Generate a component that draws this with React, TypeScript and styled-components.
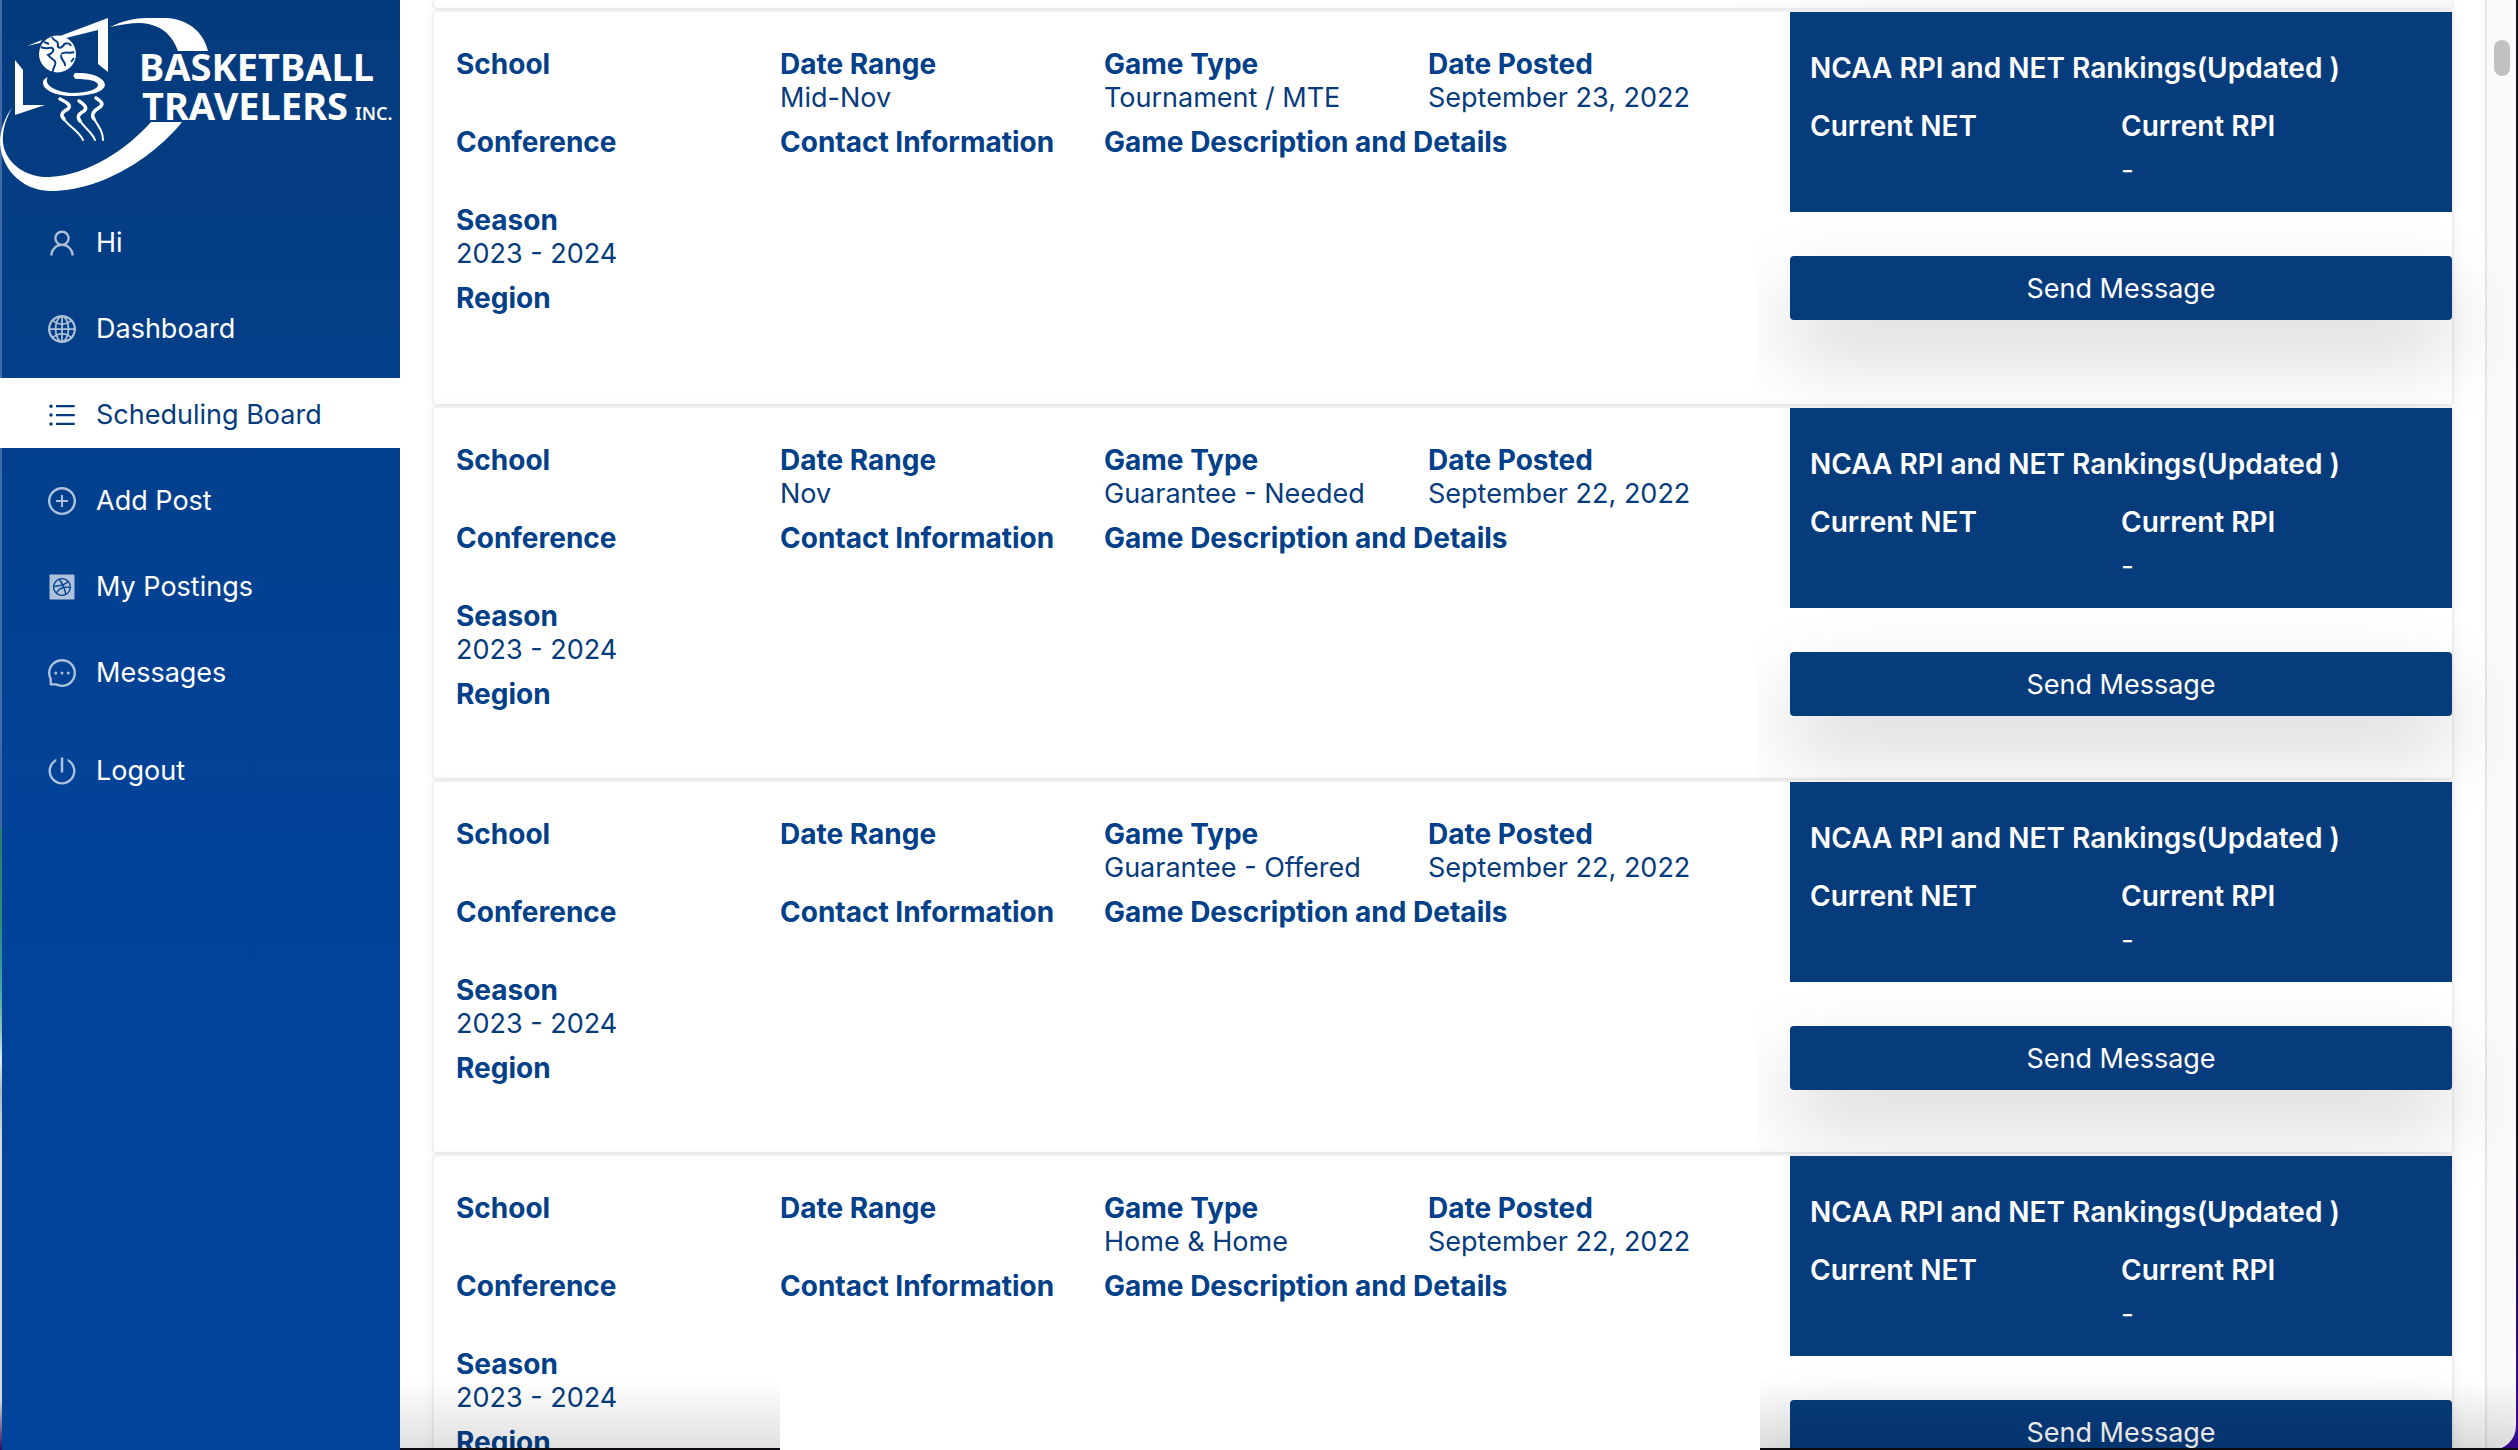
import React from "react";
import styled, { createGlobalStyle, css } from "styled-components";
import {
  AiOutlineUser,
  AiOutlineGlobal,
  AiOutlineUnorderedList,
  AiOutlinePlusCircle,
  AiFillDribbbleSquare,
  AiOutlineMessage,
  AiOutlinePoweroff,
} from "react-icons/ai";

const navy = "#063b7c";
const label = "#024089";
const line = "#efefef";

const GlobalStyle = createGlobalStyle`
  *, *::before, *::after { box-sizing: border-box; }
  body {
    margin: 0;
    background: linear-gradient(#141018 80%, #3b0a9c 98%);
    font-family: Inter, "Liberation Sans", sans-serif;
    font-size: 27px;
    line-height: 34px;
    color: ${navy};
  }
`;

const Window = styled.div`
  position: relative;
  display: flex;
  height: 100vh;
  overflow: hidden;
`;

const Sidebar = styled.aside`
  position: relative;
  flex: 0 0 400px;
  background: linear-gradient(#043b7c 0, #02439a 840px, #02449b 100%);
  &::before {
    content: "";
    position: absolute;
    inset: 0 auto 0 0;
    width: 2px;
    background: linear-gradient(
      #3f6ba6 0, #3f6ba6 826px, #2c7a72 828px, #2f8f86 940px, #38a39a 980px,
      #8fc0c0 1030px, #dcebf5 1060px, #a9bdbb 1090px, #d8dadb 1140px, #d8dadb 1400px, #2a0c60 100%
    );
  }
`;

const Logo = styled.svg`
  position: relative;
  display: block;
  width: 100%;
  height: 206px;
`;

const Nav = styled.nav`
  position: relative;
  display: flex;
  flex-direction: column;
  gap: 16px;
`;

const NavLink = styled.a<{ $active?: boolean; $last?: boolean }>`
  display: flex;
  align-items: center;
  gap: 18px;
  height: 70px;
  padding: 3px 0 0 46px;
  color: #fff;
  text-decoration: none;
  svg {
    width: 32px;
    height: 32px;
    opacity: 0.68;
  }
  ${(p) => p.$last && css`margin-top: 12px;`}
  ${(p) =>
    p.$active &&
    css`
      background: #fff;
      color: ${navy};
      svg { opacity: 1; }
    `}
`;

const Board = styled.main`
  flex: 1;
  min-width: 0;
  padding: 0 31px 0 32px;
  background: #fff;
`;

const Track = styled.div`
  flex: 0 0 31px;
  margin-right: 2px;
  padding-top: 40px;
  background: #fafafa;
  border-left: 2px solid #e6e6e6;
  border-bottom-right-radius: 24px;
`;

const Thumb = styled.div`
  width: 16px;
  height: 36px;
  margin: 0 auto;
  border-radius: 8px;
  background: #c1c1c1;
`;

const cardFrame = css`
  position: relative;
  isolation: isolate;
  border: 2px solid ${line};
  border-radius: 5px;
  background: #fff;
  box-shadow: 0 0 12px rgba(0, 0, 0, 0.05);
`;

const CardEnd = styled.div`
  ${cardFrame}
  height: 10px;
  border-top: 0;
  background: linear-gradient(90deg, #fff 64%, #f9f9f9 72%);
`;

const Card = styled.article`
  ${cardFrame}
  display: grid;
  grid-template-columns: 2fr 1fr;
  column-gap: 32px;
`;

const Details = styled.dl<{ $tall?: boolean }>`
  position: relative;
  z-index: 1;
  display: grid;
  grid-template-columns: repeat(4, 1fr);
  grid-auto-rows: 68px;
  row-gap: 10px;
  margin: 0;
  padding: 35px 6px ${(p) => (p.$tall ? 55 : 33)}px 22px;
  background: #fff;
`;

const Field = styled.div<{ $wide?: boolean; $first?: boolean }>`
  ${(p) => p.$wide && css`grid-column: span 2;`}
  ${(p) => p.$first && css`grid-column: 1;`}
  dt {
    font-size: 28px;
    font-weight: 700;
    color: ${label};
    white-space: nowrap;
  }
  dd {
    margin: 0;
    white-space: nowrap;
  }
`;

const Rank = styled.section`
  display: flex;
  flex-direction: column;
  gap: 44px;
`;

const RankPanel = styled.div`
  display: grid;
  grid-template-columns: 1fr 1fr;
  padding: 39px 20px 25px;
  background: ${navy};
  color: #fff;
  font-size: 28px;
`;

const RankTitle = styled.h2`
  grid-column: span 2;
  margin: 0 0 24px;
  font-size: inherit;
  font-weight: 600;
`;

const RankItem = styled.div`
  display: flex;
  flex-direction: column;
  gap: 10px;
  min-height: 78px;
  strong { font-weight: 600; }
`;

const SendButton = styled.button`
  height: 64px;
  padding: 2px 0 0;
  border: 0;
  border-radius: 4px;
  background: ${navy};
  color: #fff;
  font: inherit;
  box-shadow: 0 36px 80px rgba(0, 0, 0, 0.17);
`;

const BottomEdge = styled.div`
  position: absolute;
  inset: auto 0 0 400px;
  z-index: 2;
  display: grid;
  grid-template-columns: 380fr 980fr 758fr;
  height: 70px;
  pointer-events: none;
`;

const Fade = styled.div`
  background: linear-gradient(rgba(0, 0, 0, 0), rgba(0, 0, 0, 0.12)) padding-box;
  border-bottom: 2px solid #0b0a10;
`;

const Blank = styled.div`
  background: #fff;
`;

const links = [
  { text: "Hi", Icon: AiOutlineUser },
  { text: "Dashboard", Icon: AiOutlineGlobal },
  { text: "Scheduling Board", Icon: AiOutlineUnorderedList, active: true },
  { text: "Add Post", Icon: AiOutlinePlusCircle },
  { text: "My Postings", Icon: AiFillDribbbleSquare },
  { text: "Messages", Icon: AiOutlineMessage },
  { text: "Logout", Icon: AiOutlinePoweroff, last: true },
];

const posts = [
  { range: "Mid-Nov", type: "Tournament / MTE", posted: "September 23, 2022", tall: true },
  { range: "Nov", type: "Guarantee - Needed", posted: "September 22, 2022" },
  { range: "", type: "Guarantee - Offered", posted: "September 22, 2022" },
  { range: "", type: "Home & Home", posted: "September 22, 2022" },
];

function BrandLogo() {
  return (
    <Logo viewBox="0 0 400 206" preserveAspectRatio="xMinYMin meet" role="img" aria-label="Basketball Travelers Inc.">
      <g fill="#fff">
        <path d="M110 27C122 21 136 18 146 18H166C190 19 204 34 208 51H178C172 34 160 24 140 23C130 23 120 25 110 27Z" />
        <path d="M12 108C4 122 1 136 4 148C9 165 27 178 50 177C88 175 126 150 151 122H182C160 150 108 191 50 191C20 190 0 167 0 140C1 128 5 117 12 108Z" />
        <path d="M60 36L108 18V72L98 64V30L66 38Z" />
        <path d="M15 60L23 70V105H45L15 115Z" />
        <path d="M27 46L42 40L40 43Z" />
        <circle cx="57.500" cy="54" r="18.500" />
        <path d="M75 73C92 72 105 78 105 85C104 92 90 96 72 96C54 96 42 89 43 82C43 80 45 78 48 77C43 84 54 92 72 93C88 93 98 89 98 85C98 81 89 79 76 79C73 77 73 75 75 73Z" />
      </g>
      <g fill="none" stroke="#043d80" strokeWidth="2">
        <path d="M41 47C47 50 49 47 52 48C56 50 51 54 48 55C52 60 57 60 55 65C54 68 52 70 53 72" />
        <path d="M52 37C54 42 58 40 58 44C57 48 60 49 63 46C65 42 70 43 71 46" />
        <path d="M61 54C66 51 70 54 74 52M61 55C60 60 66 61 65 66M74 58L71 62M44 42L49 44" />
      </g>
      <g fill="none" stroke="#fff" strokeLinecap="round">
        <path strokeWidth="3.500" d="M60 99C66 102 72 105 68 109C62 112 60 115 64 119" />
        <path strokeWidth="2" d="M63 118C68 126 79 131 83 140" />
        <path strokeWidth="3.500" d="M79 101C84 104 88 108 84 111C78 114 77 117 80 121" />
        <path strokeWidth="2" d="M79 119C84 128 92 132 95 140" />
        <path strokeWidth="3.500" d="M96 98C101 101 104 104 100 107C93 111 91 115 94 119" />
        <path strokeWidth="2" d="M93 117C98 126 103 131 103 140" />
      </g>
      <g fill="#fff" fontFamily='"Noto Sans", sans-serif' fontWeight="700">
        <text x="139" y="81" fontSize="38">BASKETBALL</text>
        <text x="142" y="120" fontSize="38">TRAVELERS</text>
        <text x="355" y="120" fontSize="18" fontWeight="600">INC.</text>
      </g>
    </Logo>
  );
}

function Post({ post }: { post: (typeof posts)[number] }) {
  return (
    <Card>
      <Details $tall={post.tall}>
        <Field><dt>School</dt><dd /></Field>
        <Field><dt>Date Range</dt><dd>{post.range}</dd></Field>
        <Field><dt>Game Type</dt><dd>{post.type}</dd></Field>
        <Field><dt>Date Posted</dt><dd>{post.posted}</dd></Field>
        <Field><dt>Conference</dt><dd /></Field>
        <Field><dt>Contact Information</dt><dd /></Field>
        <Field $wide><dt>Game Description and Details</dt><dd /></Field>
        <Field $first><dt>Season</dt><dd>2023 - 2024</dd></Field>
        <Field $first><dt>Region</dt><dd /></Field>
      </Details>
      <Rank>
        <RankPanel>
          <RankTitle>NCAA RPI and NET Rankings(Updated )</RankTitle>
          <RankItem><strong>Current NET</strong></RankItem>
          <RankItem><strong>Current RPI</strong><span>-</span></RankItem>
        </RankPanel>
        <SendButton type="button">Send Message</SendButton>
      </Rank>
    </Card>
  );
}

export default function App() {
  return (
    <>
      <GlobalStyle />
      <Window>
        <Sidebar>
          <BrandLogo />
          <Nav>
            {links.map(({ text, Icon, active, last }) => (
              <NavLink key={text} href="#" $active={active} $last={last}>
                <Icon aria-hidden />
                {text}
              </NavLink>
            ))}
          </Nav>
        </Sidebar>
        <Board>
          <CardEnd />
          {posts.map((post, i) => (
            <Post key={i} post={post} />
          ))}
        </Board>
        <Track>
          <Thumb />
        </Track>
        <BottomEdge>
          <Fade />
          <Blank />
          <Fade />
        </BottomEdge>
      </Window>
    </>
  );
}
